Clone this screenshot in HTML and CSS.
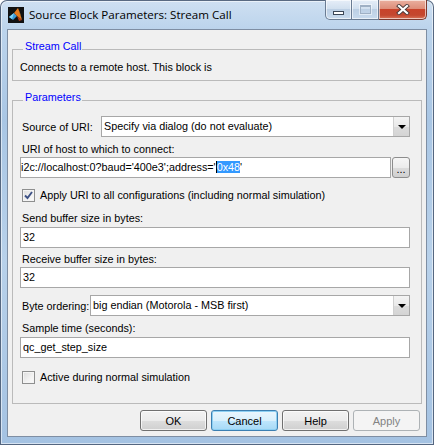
FILE: index.html
```html
<!DOCTYPE html>
<html lang="en">
<head>
    <meta charset="UTF-8">
    <title>Source Block Parameters: Stream Call</title>
    <link rel="stylesheet" href="styles.css">
</head>
<body>

    <div class="window">
        <div class="titlebar">
            <svg class="app-icon" width="16" height="16" viewBox="0 0 16 16">
                <rect width="16" height="16" fill="#111"/>
                <polygon points="1,10 6,6 9,9 5,13" fill="#3a9ad9"/>
                <polygon points="1,10 6,6 4,12" fill="#7fd3f7"/>
                <polygon points="6,6 10,1 14,13 9,9" fill="#e67a1e"/>
                <polygon points="10,1 12,6 14,13" fill="#f6b23c"/>
                <polygon points="9,9 14,13 11,14" fill="#b33b12"/>
            </svg>
            <span class="title">Source Block Parameters: Stream Call</span>
            <div class="caption-buttons">
                <span class="cap-btn cap-min"><span class="min-glyph"></span></span>
                <span class="cap-btn cap-max"><span class="max-glyph"></span></span>
                <span class="cap-btn cap-close">
                    <svg width="14" height="11" viewBox="0 0 14 11">
                        <path d="M3 2 L11 9 M11 2 L3 9" stroke="#4a3a3a" stroke-width="4" stroke-linecap="square"/>
                        <path d="M3 2 L11 9 M11 2 L3 9" stroke="#fff" stroke-width="2.2" stroke-linecap="square"/>
                    </svg>
                </span>
            </div>
        </div>

        <div class="client">
            <fieldset class="group group-desc">
                <legend>Stream Call</legend>
                <p class="desc">Connects to a remote host. This block is</p>
            </fieldset>

            <fieldset class="group group-params">
                <legend>Parameters</legend>

                <div class="row source-row">
                    <span class="inline-label source-label">Source of URI:</span>
                    <div class="select">
                        <span class="select-text">Specify via dialog (do not evaluate)</span>
                        <span class="select-arrow"></span>
                    </div>
                </div>

                <div class="label uri-label">URI of host to which to connect:</div>
                <div class="row uri-row">
                    <div class="field uri-field">i2c://localhost:0?baud='400e3';address='<span class="sel">0x48</span>'</div>
                    <span class="browse-btn">...</span>
                </div>

                <div class="check-row apply-row">
                    <span class="checkbox">
                        <svg width="11" height="11" viewBox="0 0 11 11">
                            <path d="M2 5.5 L4.5 8 L9 2" fill="none" stroke="#3d5185" stroke-width="1.9"/>
                        </svg>
                    </span>
                    <span>Apply URI to all configurations (including normal simulation)</span>
                </div>

                <div class="label send-label">Send buffer size in bytes:</div>
                <div class="field send-field">32</div>

                <div class="label recv-label">Receive buffer size in bytes:</div>
                <div class="field recv-field">32</div>

                <div class="row byte-row">
                    <span class="inline-label byte-label">Byte ordering:</span>
                    <div class="select">
                        <span class="select-text">big endian (Motorola - MSB first)</span>
                        <span class="select-arrow"></span>
                    </div>
                </div>

                <div class="label sample-label">Sample time (seconds):</div>
                <div class="field sample-field">qc_get_step_size</div>

                <div class="check-row active-row">
                    <span class="checkbox"></span>
                    <span>Active during normal simulation</span>
                </div>
            </fieldset>

            <div class="buttons">
                <button class="btn">OK</button>
                <button class="btn btn-focus">Cancel</button>
                <button class="btn">Help</button>
                <button class="btn btn-disabled">Apply</button>
            </div>
        </div>
    </div>

</body>
</html>
```

FILE: styles.css
```css
* { box-sizing: border-box; margin: 0; padding: 0; }
body {
    width: 434px; height: 445px; overflow: hidden;
    font-family: "Liberation Sans", Arial, sans-serif; font-size: 10.8px; color: #000;
    background: #fff;
}

/* window frame */
.window {
    width: 434px; height: 445px;
    display: flex; flex-direction: column;
    border-radius: 7px 7px 0 0;
    background: linear-gradient(180deg, #cfe0f2 0%, #bcd4ec 28px, #a9c6e4 120px, #b8d1ea 260px, #a4c2e2 445px);
    box-shadow: inset 0 0 0 1px rgba(40, 60, 90, 0.75), inset 0 0 0 2px rgba(255, 255, 255, 0.55);
}
.titlebar {
    height: 29px; flex: none;
    display: flex; align-items: flex-start;
    padding: 0 7px 0 8px;
}
.app-icon { margin-top: 7px; flex: none; }
.title {
    margin: 7px 0 0 5px; line-height: 16px;
    font-family: "Open Sans", "Noto Sans", sans-serif; font-size: 11.6px; color: #000;
}
.caption-buttons { margin-left: auto; display: flex; height: 20px; }
.cap-btn {
    height: 20px; display: flex; align-items: center; justify-content: center;
    border: 1px solid #6a7c93; border-top: none; border-left: none;
    background: linear-gradient(180deg, #e6eef8 0%, #d2e0ef 45%, #bccfe4 50%, #c9dbee 100%);
    box-shadow: inset 0 0 0 1px rgba(255, 255, 255, 0.6);
}
.cap-min { width: 27px; border-left: 1px solid #6a7c93; border-bottom-left-radius: 5px; }
.cap-max { width: 27px; }
.cap-close {
    width: 48px; border-bottom-right-radius: 5px; border-color: #7c3a30;
    background: linear-gradient(180deg, #eab0a0 0%, #de8e7a 45%, #c8432b 50%, #c4472f 80%, #d8765c 100%);
}
.min-glyph {
    width: 11px; height: 4px; margin-top: 6px;
    background: #fff; border: 1px solid #3b4656;
}
.max-glyph {
    width: 11px; height: 9px;
    border: 1px solid #9fb0c4; border-top-width: 2px;
    box-shadow: 0 0 0 1px rgba(255, 255, 255, 0.5);
}

/* client area */
.client {
    flex: 1; margin: 0 7px 8px;
    background: #f0f0f0; border: 1px solid #7e8ea3;
    padding: 9px 4px 0;
    display: flex; flex-direction: column;
}
.group { border: 1px solid #bababa; padding: 0 11px 0 7px; min-inline-size: 0; }
.group legend {
    color: #0000ff; line-height: 14px;
    padding: 0 1px 6px 2px; margin-left: 3px;
}
.group-desc { padding-bottom: 6px; }
.desc { margin-top: 1px; line-height: 14px; }
.group-params { margin-top: 9px; padding-bottom: 19px; }

.row { display: flex; align-items: center; }
.label { line-height: 14px; padding-left: 2px; }
.inline-label { padding-left: 2px; flex: none; white-space: nowrap; }
.source-label { width: 81px; }
.byte-label { width: 70px; }

.source-row { margin-top: 6px; }
.uri-label { margin-top: 5px; }
.uri-row { margin-top: 1px; gap: 1px; }
.apply-row { margin-top: 10px; }
.send-label { margin-top: 9px; }
.send-field { margin-top: 2px; }
.recv-label { margin-top: 4px; }
.recv-field { margin-top: 1px; }
.byte-row { margin-top: 7px; }
.sample-label { margin-top: 5px; }
.sample-field { margin-top: 2px; }
.active-row { margin-top: 12px; }

/* text fields and combo boxes */
.field {
    height: 21px; line-height: 19px; padding: 0 2px;
    background: #fff; border: 1px solid #a7a7a7;
    white-space: nowrap; overflow: hidden;
}
.uri-field { flex: 1; padding-left: 0; }
.sel { background: #3399ff; color: #fff; border-left: 1px solid #000; }
.browse-btn {
    width: 18px; height: 21px; flex: none;
    display: flex; align-items: flex-end; justify-content: center;
    padding-bottom: 3px; line-height: 10px; font-size: 11px;
    border: 1px solid #8d8d8d; border-radius: 3px;
    background: linear-gradient(180deg, #f6f6f6 0%, #ececec 50%, #dcdcdc 51%, #d0d0d0 100%);
}
.select {
    flex: 1; height: 21px;
    display: flex; align-items: stretch;
    background: #fff; border: 1px solid #a7a7a7;
}
.select-text { flex: 1; line-height: 19px; padding-left: 2px; white-space: nowrap; overflow: hidden; }
.select-arrow {
    width: 16px; flex: none; position: relative;
    background: linear-gradient(180deg, #f4f4f4 0%, #e9e9e9 50%, #dcdcdc 51%, #d4d4d4 100%);
    border-left: 1px solid #d0d0d0;
}
.select-arrow::after {
    content: ""; position: absolute; left: 4px; top: 8px;
    border-left: 4px solid transparent; border-right: 4px solid transparent;
    border-top: 4px solid #000;
}

/* check boxes */
.check-row { display: flex; align-items: center; gap: 5px; padding-left: 2px; line-height: 14px; }
.checkbox {
    width: 13px; height: 13px; flex: none;
    display: flex; align-items: center; justify-content: center;
    border: 1px solid #8e8f8f;
    background: linear-gradient(135deg, #dcdcdc 0%, #f2f2f2 60%, #fbfbfb 100%);
    box-shadow: inset 0 0 0 1px #f4f4f4;
}

/* dialog buttons */
.buttons { margin-top: 6px; display: flex; justify-content: flex-end; gap: 4px; padding-right: 2px; }
.btn {
    width: 67px; height: 21px;
    font-family: "Liberation Sans", Arial, sans-serif; font-size: 11px; color: #000;
    border: 1px solid #707070; border-radius: 3px;
    background: linear-gradient(180deg, #f2f2f2 0%, #ebebeb 50%, #dddddd 51%, #cfcfcf 100%);
    box-shadow: inset 0 0 0 1px rgba(255, 255, 255, 0.7);
}
.btn-focus {
    border-color: #3c7fb1;
    background: linear-gradient(180deg, #eaf6fd 0%, #d9f0fc 50%, #bee6fd 51%, #a7d9f5 100%);
    box-shadow: inset 0 0 0 1px #8ed0f3;
}
.btn-disabled {
    color: #838383; border-color: #adb2b5;
    background: #f4f4f4; box-shadow: none;
}
```
